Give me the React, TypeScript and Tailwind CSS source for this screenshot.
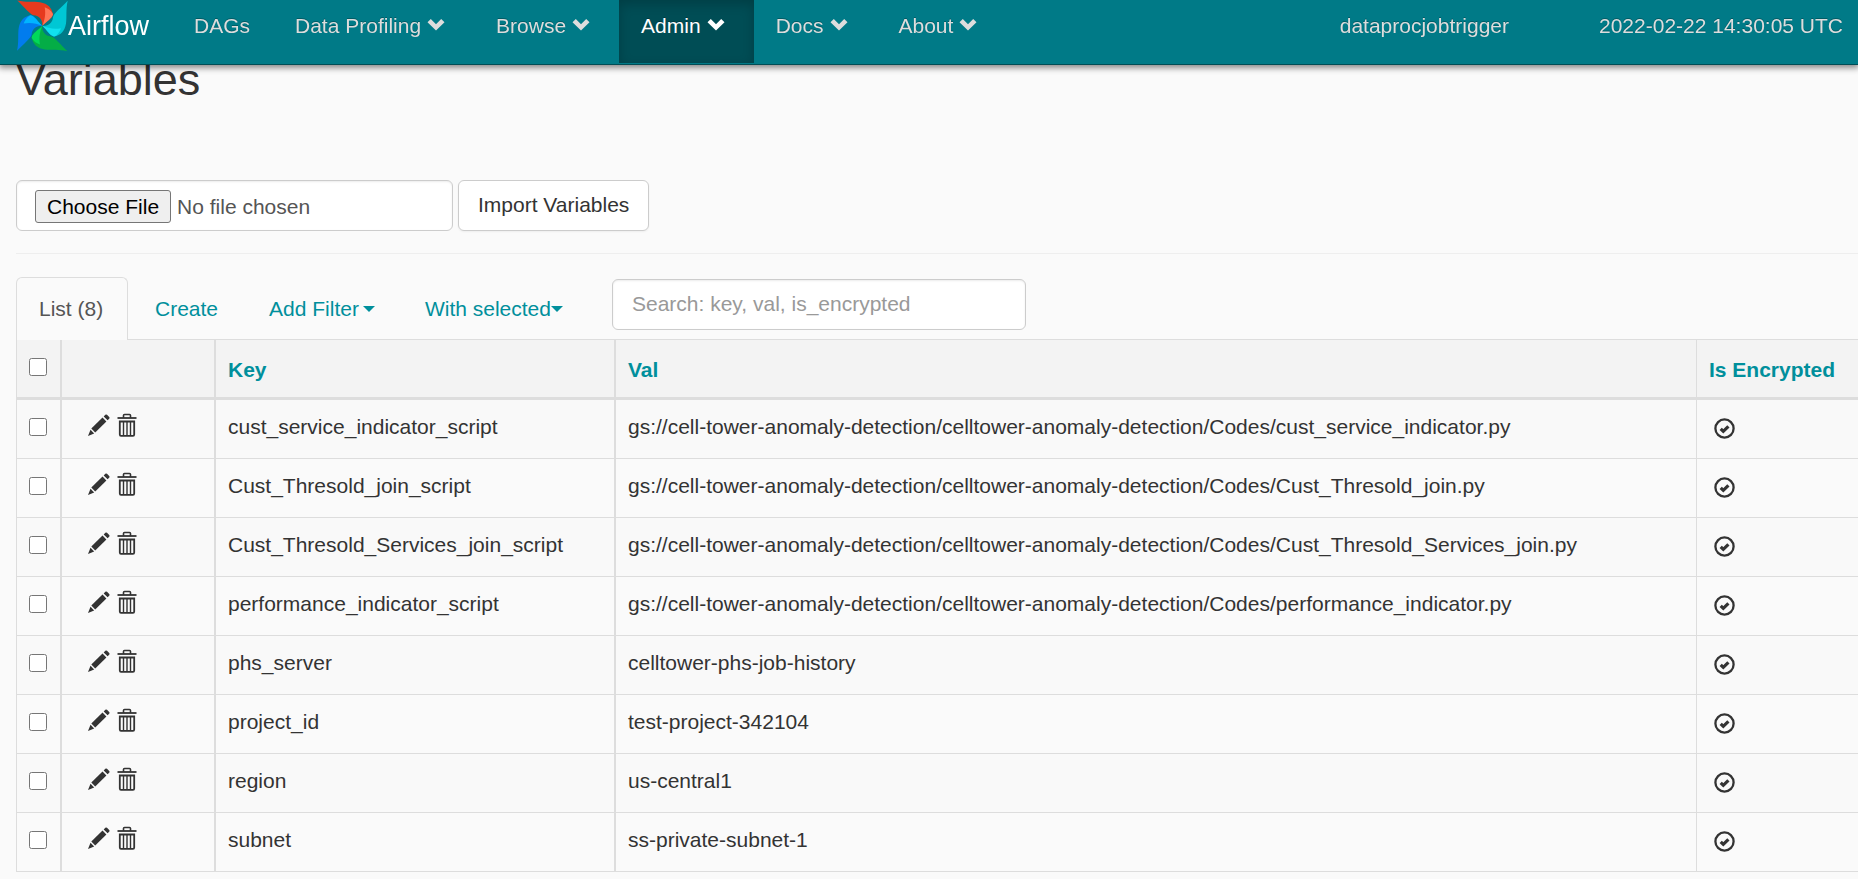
import React from "react";

type NavEntry = { label: string; menu?: boolean; active?: boolean };

const NAV: NavEntry[] = [
  { label: "DAGs" },
  { label: "Data Profiling", menu: true },
  { label: "Browse", menu: true },
  { label: "Admin", menu: true, active: true },
  { label: "Docs", menu: true },
  { label: "About", menu: true },
];

const BUCKET = "gs://cell-tower-anomaly-detection/celltower-anomaly-detection/Codes/";

const ROWS = [
  { key: "cust_service_indicator_script", val: BUCKET + "cust_service_indicator.py" },
  { key: "Cust_Thresold_join_script", val: BUCKET + "Cust_Thresold_join.py" },
  { key: "Cust_Thresold_Services_join_script", val: BUCKET + "Cust_Thresold_Services_join.py" },
  { key: "performance_indicator_script", val: BUCKET + "performance_indicator.py" },
  { key: "phs_server", val: "celltower-phs-job-history" },
  { key: "project_id", val: "test-project-342104" },
  { key: "region", val: "us-central1" },
  { key: "subnet", val: "ss-private-subnet-1" },
];

const BLADES = [
  { turn: "rotate(0 75 77)", main: "#e63a1e", fold: "#ff7557" },
  { turn: "rotate(90 75 77)", main: "#00c7d4", fold: "#11e1ee" },
  { turn: "rotate(180 75 77)", main: "#04ad46", fold: "#00d95a" },
  { turn: "rotate(270 75 77)", main: "#017cee", fold: "#00b5ff" },
];

function Pinwheel() {
  return (
    <svg viewBox="-1 0 153 155" className="h-[52px] w-[51px] shrink-0" aria-hidden="true">
      {BLADES.map((b) => (
        <g key={b.main} transform={b.turn}>
          <path d="M0 1C26 7 48 3 68 6C92 10 103 22 107 42C104 56 86 64 75 77C77 60 66 46 49 45C38 43 22 22 0 1Z" fill={b.main} />
          <path d="M82 21C96 26 105 35 107 42C104 55 88 63 75 77C82 60 86 42 82 21Z" fill={b.fold} />
        </g>
      ))}
    </svg>
  );
}

function Chevron() {
  return (
    <svg viewBox="0 0 18 13" className="mb-[3px] h-[13px] w-[18px]" fill="currentColor" aria-hidden="true">
      <path d="M3.8 1 9 6.200 14.200 1 17.500 4.200 9 12.500 .5 4.200Z" />
    </svg>
  );
}

function Caret() {
  return (
    <svg viewBox="0 0 12 6" className="h-[6px] w-[12px]" fill="currentColor" aria-hidden="true">
      <path d="M0 0H12L6 6Z" />
    </svg>
  );
}

function Pencil() {
  return (
    <svg viewBox="0 0 22 22" className="h-[22px] w-[22px]" fill="#333" aria-hidden="true">
      <path d="M17.300.8Q18.200 0 19 .8L21.200 3Q22 3.900 21.200 4.700L19.600 6.300 15.700 2.400Z" />
      <path d="M14.500 3.600 18.400 7.500 7.200 18.400 3.300 14.600Z" />
      <path d="M2.500 15.700 6.200 19.400 0 22Z" />
    </svg>
  );
}

function Trash() {
  return (
    <svg viewBox="0 0 20 24" className="h-[24px] w-[20px]" fill="none" stroke="#333" aria-hidden="true">
      <path d="M.5 5H19.500" strokeWidth="1.800" />
      <path d="M6.500 5V2.500Q6.500 1.500 7.500 1.500H12.500Q13.500 1.500 13.500 2.500V5" strokeWidth="1.600" />
      <path d="M2.800 8.500H17.200V21.500Q17.200 22.800 16 22.800H4Q2.800 22.800 2.800 21.500Z" strokeWidth="1.800" />
      <path d="M6.500 8.500V22M10 8.500V22M13.500 8.500V22" strokeWidth="1.400" />
    </svg>
  );
}

function OkCircle() {
  return (
    <svg viewBox="0 0 21 21" className="h-[21px] w-[21px]" fill="none" stroke="#333" aria-hidden="true">
      <circle cx="10.500" cy="10.500" r="9.100" strokeWidth="2.300" />
      <path d="M6.700 10.800 9.300 13.300 14.400 8.300" strokeWidth="3.200" />
    </svg>
  );
}

function NavLink({ label, menu, active }: NavEntry) {
  const tone = active
    ? "bg-[#004d55] text-white shadow-[inset_0_4px_12px_rgba(0,0,0,0.2)]"
    : "text-[#dddddd]";
  return (
    <a
      href="#"
      className={`flex h-[63px] items-center gap-[6px] pb-[11px] pl-[22px] [text-shadow:0_-1px_0_rgba(0,0,0,0.25)] ${menu ? "pr-[29px]" : "pr-[23px]"} ${tone}`}
    >
      {label}
      {menu && <Chevron />}
    </a>
  );
}

const cell = "border-b border-[#ddd] pb-[16px] pt-[12px]";

export default function App() {
  return (
    <div className="min-h-screen overflow-x-hidden bg-[#fafafa] font-['Liberation_Sans',Arial,sans-serif] text-[21px] leading-[30px] text-[#333]">
      <header className="fixed inset-x-0 top-0 z-10 flex h-[65px] items-start whitespace-nowrap border-b border-[#004d55] bg-[#007a87] shadow-[0_2px_6px_1px_rgba(0,0,0,0.45)]">
        <a href="#" className="flex h-[52px] w-[172px] shrink-0 items-center pl-[17px] text-[27px] text-white">
          <Pinwheel />
          <span>Airflow</span>
        </a>
        <nav className="flex flex-1">
          {NAV.map((n) => (
            <NavLink key={n.label} {...n} />
          ))}
        </nav>
        <div className="flex h-[63px] items-center gap-[90px] pb-[11px] pr-[15px] text-[#dddddd] [text-shadow:0_-1px_0_rgba(0,0,0,0.25)]">
          <a href="#">dataprocjobtrigger</a>
          <span>2022-02-22 14:30:05 UTC</span>
        </div>
      </header>

      <main className="pl-[16px] pt-[55px]">
        <h2 className="text-[45px] leading-[50px]">Variables</h2>

        <form className="mt-[75px] flex gap-[5px]" onSubmit={(e) => e.preventDefault()}>
          <input
            type="file"
            aria-label="Variables file"
            className="h-[51px] w-[437px] rounded-[6px] border border-[#ccc] bg-white py-[9px] pl-[18px] text-[#555] shadow-[inset_0_1px_2px_rgba(0,0,0,0.08)] file:mr-[6px] file:h-[33px] file:rounded-[3px] file:border file:border-solid file:border-[#767676] file:bg-[#efefef] file:px-[11px] file:text-black"
          />
          <button
            type="submit"
            className="h-[51px] rounded-[6px] border border-[#ccc] bg-white px-[19px] pb-[2px] shadow-[0_1px_2px_rgba(0,0,0,0.05)]"
          >
            Import Variables
          </button>
        </form>

        <hr className="mt-[22px] border-[#eee]" />

        <div className="mt-[23px] flex h-[63px] items-stretch whitespace-nowrap border-b border-[#ddd] text-[#008f9c]">
          <a
            href="#"
            className="-mb-px flex w-[112px] items-center rounded-t-[6px] border border-b-0 border-[#ddd] bg-[#fafafa] pl-[22px] text-[#555]"
          >
            List (8)
          </a>
          <a href="#" className="flex items-center pl-[27px] pt-[2px]">Create</a>
          <button type="button" className="ml-[51px] flex items-center gap-[4px] pt-[2px]">
            Add Filter
            <Caret />
          </button>
          <button type="button" className="ml-[50px] flex items-center pt-[2px]">
            With selected
            <Caret />
          </button>
          <input
            type="text"
            aria-label="Search"
            placeholder="Search: key, val, is_encrypted"
            className="ml-[49px] mt-[2px] h-[51px] w-[414px] rounded-[6px] border border-[#ccc] bg-white px-[19px] pb-[2px] text-[#555] shadow-[inset_0_1px_2px_rgba(0,0,0,0.08)] placeholder:text-[#999]"
          />
        </div>

        <table className="w-full table-fixed border-separate border-spacing-0 text-left">
          <colgroup>
            <col className="w-[46px]" />
            <col className="w-[154px]" />
            <col className="w-[400px]" />
            <col />
            <col className="w-[162px]" />
          </colgroup>
          <thead>
            <tr className="bg-[#f3f3f3] text-[#008f9c] [&>th]:h-[60px] [&>th]:border-b-3 [&>th]:border-[#ddd]">
              <th className="border-l border-r-2 pb-[4px] pl-[12px]">
                <input type="checkbox" aria-label="Select all records" className="block size-[18px]" />
              </th>
              <th className="border-r-2" aria-label="Actions" />
              <th className="border-r-2 pl-[12px] pt-[3px]"><a href="#">Key</a></th>
              <th className="pl-[12px] pt-[3px]"><a href="#">Val</a></th>
              <th className="whitespace-nowrap border-l pl-[12px] pt-[3px]"><a href="#">Is Encrypted</a></th>
            </tr>
          </thead>
          <tbody>
            {ROWS.map((r) => (
              <tr key={r.key} className="odd:bg-[#f9f9f9]">
                <td className="border-b border-l border-r-2 border-[#ddd] pb-[4px] pl-[12px]">
                  <input type="checkbox" aria-label={`Select ${r.key}`} className="block size-[18px]" />
                </td>
                <td className="border-b border-r-2 border-[#ddd] pb-[8px] pl-[26px]">
                  <div className="flex items-center gap-[7px]">
                    <button type="button" aria-label={`Edit ${r.key}`}><Pencil /></button>
                    <button type="button" aria-label={`Delete ${r.key}`}><Trash /></button>
                  </div>
                </td>
                <td className={`${cell} border-r-2 pl-[12px]`}>{r.key}</td>
                <td className={`${cell} pl-[12px]`}>{r.val}</td>
                <td className="border-b border-l border-[#ddd] pb-[2px] pl-[17px]"><OkCircle /></td>
              </tr>
            ))}
          </tbody>
        </table>
      </main>
    </div>
  );
}
